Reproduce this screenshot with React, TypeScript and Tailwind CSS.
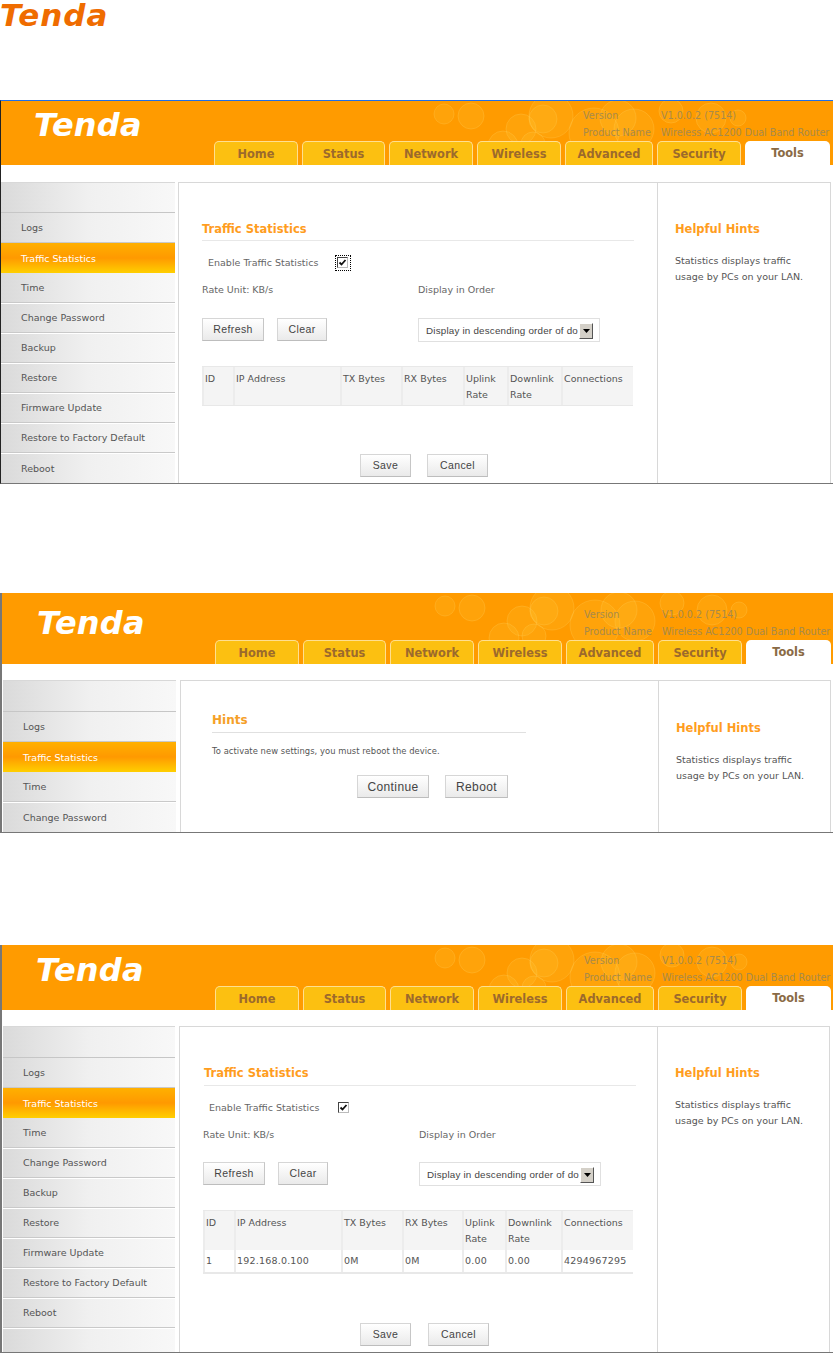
const tabs = [
  { label: "Home", w: "w-[84px]" },
  { label: "Status", w: "w-[83px]" },
  { label: "Network", w: "w-[84px]" },
  { label: "Wireless", w: "w-[84px]" },
  { label: "Advanced", w: "w-[88px]" },
  { label: "Security", w: "w-[84px]" },
];
const allMenu = ["Logs", "Traffic Statistics", "Time", "Change Password", "Backup", "Restore", "Firmware Update", "Restore to Factory Default", "Reboot"];
const dejavu = "font-['DejaVu_Sans',sans-serif]";
const arial = "font-['Liberation_Sans',Arial,sans-serif]";

function Bubbles() {
  const circles: [number, number, number][] = [
    [23, 13, 10], [50, 15, 13], [100, 28, 15], [122, 18, 14], [130, 15, 22], [82, 45, 15], [112, 43, 12], [173, 32, 25], [213, 28, 20], [197, 17, 18], [290, 17, 15], [317, 17, 8], [250, 10, 12],
  ];
  return (
    <svg className="absolute top-0 left-[420px] pointer-events-none" width="413" height="65" viewBox="0 0 413 65">
      {circles.map(([x, y, r], i) => (
        <circle key={i} cx={x} cy={y} r={r} fill="#ffd84a" fillOpacity="0.14" stroke="#ffe27a" strokeOpacity="0.2" />
      ))}
    </svg>
  );
}

function Header({ h, pad, tabGap }: { h: string; pad: string; tabGap: string }) {
  return (
    <div className={`relative ${h} shrink-0 bg-[#ff9b00] flex overflow-hidden`}>
      <Bubbles />
      <div className={`w-[213px] ${pad} shrink-0`}>
        <span className={`block ${dejavu} font-bold italic text-[32px] leading-[36px] tracking-[0.2px] text-white`}>Tenda</span>
      </div>
      <div className="relative flex-1 flex flex-col justify-end">
        <div className={`flex-1 ${tabGap} pl-[369px] text-[9.6px] leading-[17px] text-[#a88a4a] ${dejavu} whitespace-nowrap`}>
          <div className="flex"><span className="w-[78px]">Version</span><span>V1.0.0.2 (7514)</span></div>
          <div className="flex"><span className="w-[78px]">Product Name</span><span>Wireless AC1200 Dual Band Router</span></div>
        </div>
        <div className={`flex gap-[4px] h-[24px] ${dejavu}`}>
          {tabs.map((t) => (
            <div key={t.label} className={`${t.w} h-[24px] pt-[2px] bg-[#fcc011] border border-b-0 border-[#ffdf90] rounded-t-[5px] flex items-center justify-center text-[11.4px] font-bold text-[#9c6a2c]`}>{t.label}</div>
          ))}
          <div className="w-[85px] h-[24px] pt-[2px] bg-white rounded-t-[5px] flex items-center justify-center text-[11.4px] font-bold text-[#8a6a45]">Tools</div>
        </div>
      </div>
    </div>
  );
}

function Sidebar({ items, extra, firstH, w }: { items: string[]; extra: boolean; firstH: string; w: string }) {
  return (
    <div className={`${w} shrink-0 self-stretch flex flex-col bg-gradient-to-r from-[#dadada] via-[#f0f0f0] to-[#f8f8f8] overflow-hidden border-t border-[#d8d8d8] ${dejavu}`}>
      <div className={`${firstH} border-b border-[#c6c6c6] shrink-0`} />
      {items.map((m, i) =>
        m === "Traffic Statistics" ? (
          <div key={m} className="h-[30px] shrink-0 pt-[2px] flex items-center pl-[20px] text-[9.5px] text-white bg-gradient-to-b from-[#ffb000] via-[#ff9900] to-[#ffcf00]">{m}</div>
        ) : (
          <div key={m} className={`h-[30px] shrink-0 pt-[2px] flex items-center pl-[20px] text-[9.5px] text-[#555] ${i === items.length - 1 && !extra ? "" : "border-b border-[#c9c9c9] shadow-[0_1px_0_#fff]"}`}>{m}</div>
        )
      )}
    </div>
  );
}

function Btn({ label, w, h = "h-[23px]", text = "text-[10.5px]" }: { label: string; w: string; h?: string; text?: string }) {
  return (
    <div className={`${w} ${h} shrink-0 flex items-center justify-center ${text} tracking-[0.4px] text-[#444] ${arial} border border-[#d6d6d6] border-b-[#bdbdbd] border-r-[#c6c6c6] bg-gradient-to-b from-white to-[#eaeaea]`}>{label}</div>
  );
}

function Check({ focused }: { focused: boolean }) {
  const box = (
    <span className="block w-[11px] h-[11px] bg-white border border-[#444] border-r-[#bbb] border-b-[#bbb]">
      <svg width="9" height="9" viewBox="0 0 9 9"><path d="M1.5 4.5 L3.5 6.5 L7.5 2" fill="none" stroke="#111" strokeWidth="1.8" /></svg>
    </span>
  );
  return focused ? <span className="block border border-dotted border-black p-[1px] w-[16px] h-[16px]">{box}</span> : <span className="block p-[2px] w-[16px] h-[16px]">{box}</span>;
}

const colsA = ["w-[31px]", "w-[107px]", "w-[61px]", "w-[62px]", "w-[44px]", "w-[54px]", "w-[72px]"];
const colsB = ["w-[31px]", "w-[107px]", "w-[61px]", "w-[60px]", "w-[43px]", "w-[56px]", "w-[72px]"];
const heads: [string, string?][] = [["ID"], ["IP Address"], ["TX Bytes"], ["RX Bytes"], ["Uplink", "Rate"], ["Downlink", "Rate"], ["Connections"]];
const row = ["1", "192.168.0.100", "0M", "0M", "0.00", "0.00", "4294967295"];

function Table({ rows }: { rows: boolean }) {
  const cols = rows ? colsB : colsA;
  return (
    <div className={`${rows ? "w-[430px] border-b-2" : "w-[431px]"} border-y border-[#e8e8e8] text-[9.5px] text-[#555] ${dejavu}`}>
      <div className={`flex bg-[#f4f4f4] ${rows ? "h-[39px]" : "h-[38px]"}`}>
        {heads.map(([a, b], i) => (
          <div key={a} className={`${cols[i]} shrink-0 pl-[1px] pt-[4px] leading-[16px] border-l-2 border-[#ececec] whitespace-nowrap`}>
            <div>{a}</div>
            {b && <div>{b}</div>}
          </div>
        ))}
      </div>
      {rows && (
        <div className="flex h-[22px] items-center">
          {row.map((c, i) => (
            <div key={i} className={`${cols[i]} shrink-0 pl-[1px] h-full flex items-center border-l-2 border-[#ececec] whitespace-nowrap tracking-[0.2px]`}>{c}</div>
          ))}
        </div>
      )}
    </div>
  );
}

function Hints({ pad }: { pad: string }) {
  return (
    <div className={`flex-1 border-l border-[#d8d8d8] ${pad} pl-[17px] pr-[6px] ${dejavu}`}>
      <div className="text-[11.5px] font-bold text-[#ff9d1e] leading-[14px]">Helpful Hints</div>
      <div className="mt-[17px] text-[9.5px] leading-[16px] text-[#555]">Statistics displays traffic<br />usage by PCs on your LAN.</div>
    </div>
  );
}

function StatsMain({ rows, focused, pad, gapSave, title, btnMt, tableMt, savePad, saveGap }: { rows: boolean; focused: boolean; pad: string; gapSave: string; title: string; btnMt: string; tableMt: string; savePad: string; saveGap: string }) {
  return (
    <div className={`flex-1 min-w-0 ${pad} ${dejavu}`}>
      <div className={`w-[432px] border-b border-[#e8e8e8] ${title} text-[11.5px] font-bold text-[#ff9d1e] leading-[14px]`}>Traffic Statistics</div>
      <div className="mt-[14px] pl-[6px] flex items-center h-[16px] text-[9.5px] text-[#666]">
        <span className="w-[127px]">Enable Traffic Statistics</span>
        <Check focused={focused} />
      </div>
      <div className="mt-[12px] flex h-[14px] items-center text-[9.5px] text-[#666]">
        <span className="w-[216px]">Rate Unit: KB/s</span>
        <span>Display in Order</span>
      </div>
      <div className={`${btnMt} flex items-start`}>
        <Btn label="Refresh" w="w-[62px]" />
        <div className="w-[13px]" />
        <Btn label="Clear" w="w-[50px]" />
        <div className="w-[91px]" />
        <div className={`w-[182px] h-[24px] border border-[#e0e0e0] flex items-center pl-[7px] pr-[4px] pt-[2px] text-[9.8px] tracking-[0.2px] text-[#444] ${arial}`}>
          <span className="w-[153px] overflow-hidden whitespace-nowrap">Display in descending order of do</span>
          <span className="w-[14px] h-[16px] bg-[#d4d0c8] border border-t-white border-l-white border-r-[#555] border-b-[#555] flex items-center justify-center shrink-0">
            <svg width="7" height="4" viewBox="0 0 7 4"><path d="M0 0h7L3.5 4z" fill="#000" /></svg>
          </span>
        </div>
      </div>
      <div className={tableMt}><Table rows={rows} /></div>
      <div className={`${gapSave} ${savePad} ${saveGap} flex`}>
        <Btn label="Save" w="w-[51px]" />
        <Btn label="Cancel" w="w-[61px]" />
      </div>
    </div>
  );
}

function HintMain() {
  return (
    <div className={`flex-1 min-w-0 pl-[31px] pt-[32px] ${dejavu}`}>
      <div className="w-[314px] h-[20px] border-b border-[#e0e0e0] text-[12px] font-bold text-[#f5a028] leading-[15px]">Hints</div>
      <div className="mt-[11px] text-[8.4px] tracking-[0.05px] leading-[14px] text-[#555]">To activate new settings, you must reboot the device.</div>
      <div className="mt-[17px] flex gap-[16px] pl-[145px]">
        <Btn label="Continue" w="w-[72px]" text="text-[12px]" />
        <Btn label="Reboot" w="w-[63px]" text="text-[12px]" />
      </div>
    </div>
  );
}

export default function App() {
  return (
    <div className="w-[833px] h-[1353px] bg-white overflow-hidden">
      <div className="h-[100px]">
        <span className={`block ${dejavu} font-bold italic text-[31px] leading-[30px] tracking-[1px] text-[#ef6c00]`}>Tenda</span>
      </div>

      {/* Panel 1 */}
      <div className="h-[384px] border-t border-[#1f6fe8] border-b border-b-[#777] border-l border-l-[#222] flex flex-col">
        <Header h="h-[64px]" pad="pl-[33px] pt-[6px]" tabGap="pt-[9px]" />
        <div className="flex flex-1 mt-[17px] min-h-0">
          <Sidebar items={allMenu} extra={false} firstH="h-[30px]" w="w-[174px]" />
          <div className="w-[3px] shrink-0" />
          <div className="w-[479px] shrink-0 border-l border-t border-[#d8d8d8]">
            <StatsMain rows={false} focused pad="pl-[23px] pt-[39px]" gapSave="mt-[48px]" title="h-[19px]" btnMt="mt-[21px]" tableMt="mt-[24px]" savePad="pl-[158px]" saveGap="gap-[16px]" />
          </div>
          <div className="border-t border-r border-[#d8d8d8] flex w-[174px] shrink-0">
            <Hints pad="pt-[39px]" />
          </div>
        </div>
      </div>

      <div className="h-[109px]" />

      {/* Panel 2 */}
      <div className="h-[240px] border-b border-b-[#777] border-l-2 border-l-[#777] flex flex-col">
        <Header h="h-[71px]" pad="pl-[35px] pt-[12px]" tabGap="pt-[15px]" />
        <div className="flex flex-1 mt-[16px] pl-[1px] min-h-0">
          <Sidebar items={allMenu.slice(0, 4)} extra={false} firstH="h-[31px]" w="w-[173px]" />
          <div className="w-[4px] shrink-0" />
          <div className="w-[478px] shrink-0 border-l border-t border-[#d8d8d8]">
            <HintMain />
          </div>
          <div className="border-t border-r border-[#d8d8d8] flex w-[173px] shrink-0">
            <Hints pad="pt-[40px]" />
          </div>
        </div>
      </div>

      <div className="h-[112px]" />

      {/* Panel 3 */}
      <div className="h-[408px] border-b border-b-[#777] border-l-2 border-l-[#777] flex flex-col">
        <Header h="h-[65px]" pad="pl-[34px] pt-[7px]" tabGap="pt-[9px]" />
        <div className="flex flex-1 mt-[16px] pl-[1px] min-h-0">
          <Sidebar items={allMenu} extra firstH="h-[31px]" w="w-[172px]" />
          <div className="w-[4px] shrink-0" />
          <div className="w-[478px] shrink-0 border-l border-t border-[#d8d8d8]">
            <StatsMain rows focused={false} pad="pl-[23px] pt-[39px]" gapSave="mt-[49px]" title="h-[20px] ml-[1px]" btnMt="mt-[20px]" tableMt="mt-[24px]" savePad="pl-[157px]" saveGap="gap-[17px]" />
          </div>
          <div className="border-t border-r border-[#d8d8d8] flex w-[173px] shrink-0">
            <Hints pad="pt-[39px]" />
          </div>
        </div>
      </div>
    </div>
  );
}
